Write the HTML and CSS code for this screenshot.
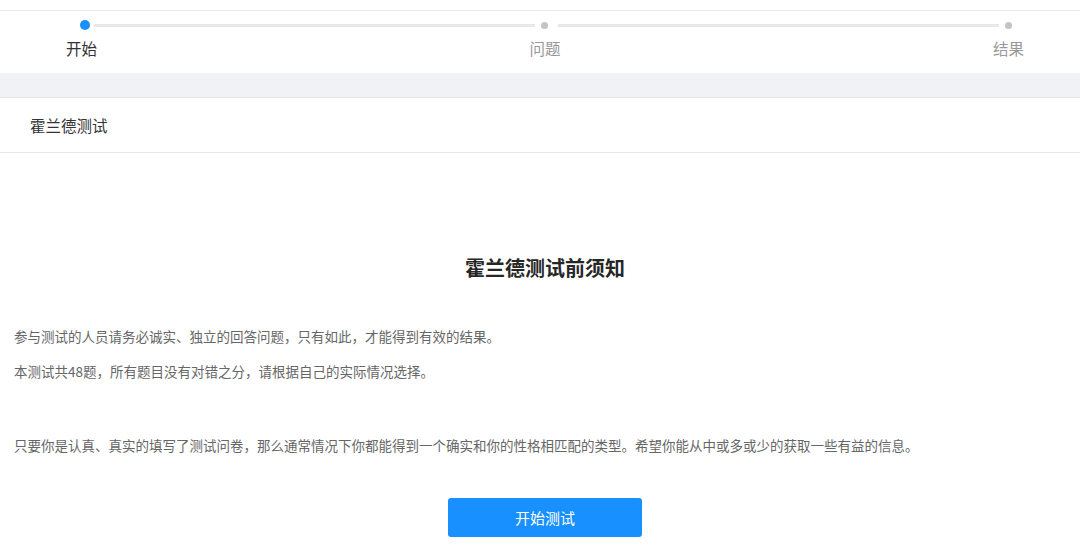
FILE: index.html
```html
<!DOCTYPE html>
<html lang="zh-CN">
<head>
    <meta charset="UTF-8">
    <meta name="viewport" content="width=device-width, initial-scale=1.0">
    <title>霍兰德测试</title>
    <link rel="stylesheet" href="styles.css">
</head>
<body>
    <div class="page">
        <div class="steps">
            <div class="dot active"></div>
            <div class="tail"></div>
            <div class="dot"></div>
            <div class="tail"></div>
            <div class="dot"></div>
            <div class="label active">开始</div>
            <div></div>
            <div class="label">问题</div>
            <div></div>
            <div class="label">结果</div>
        </div>

        <div class="band"></div>

        <div class="card">
            <div class="card-head">霍兰德测试</div>
            <div class="card-body">
                <h2 class="notice-title">霍兰德测试前须知</h2>
                <p class="first">参与测试的人员请务必诚实、独立的回答问题，只有如此，才能得到有效的结果。</p>
                <p class="second">本测试共48题，所有题目没有对错之分，请根据自己的实际情况选择。</p>
                <p class="third">只要你是认真、真实的填写了测试问卷，那么通常情况下你都能得到一个确实和你的性格相匹配的类型。希望你能从中或多或少的获取一些有益的信息。</p>
                <div class="actions">
                    <button class="start-btn">开始测试</button>
                </div>
            </div>
        </div>
    </div>
</body>
</html>
```

FILE: styles.css
```css
* {
    margin: 0;
    padding: 0;
    box-sizing: border-box;
}

html, body {
    background: #fff;
    overflow: hidden;
}

body {
    font-family: "Noto Sans CJK SC", "Noto Sans", "Liberation Sans", sans-serif;
    color: #333;
}

.page {
    width: 1090px;
    padding-top: 10px;
}

/* steps */
.steps {
    display: grid;
    grid-template-columns: auto 1fr auto 1fr auto;
    align-items: center;
    row-gap: 7px;
    border-top: 1px solid #ececec;
    padding: 9px 66px 14px 66px;
}

.dot {
    justify-self: center;
    width: 7px;
    height: 7px;
    border-radius: 50%;
    background: #c4c4c4;
}

.dot.active {
    width: 10px;
    height: 10px;
    margin-left: 6px;
    background: #1890ff;
}

.tail {
    height: 3px;
    background: #e8e8e8;
    margin: 0 -6px 0 -3px;
}

.label {
    justify-self: center;
    font-size: 15.5px;
    line-height: 22px;
    color: #999;
}

.label.active {
    color: #333;
}

.band {
    height: 25px;
    background: #f0f2f5;
    border-bottom: 1px solid #e2e4e8;
}

/* card */
.card-head {
    height: 55px;
    line-height: 54px;
    padding-left: 30px;
    font-size: 15.5px;
    color: #333;
    border-bottom: 1px solid #e8e8e8;
}

.card-body {
    padding: 101px 0 20px 14px;
}

.notice-title {
    text-align: center;
    font-size: 20px;
    line-height: 28px;
    font-weight: bold;
    color: #262626;
    margin-bottom: 44px;
    padding-right: 14px;
}

.card-body p {
    font-size: 13.5px;
    line-height: 20px;
    color: #666;
}

.card-body p.second {
    margin-top: 15px;
}

.card-body p.third {
    margin-top: 54px;
}

.actions {
    display: flex;
    justify-content: center;
    margin-top: 43px;
    padding-right: 14px;
}

.start-btn {
    width: 194px;
    height: 39px;
    border: none;
    border-radius: 3px;
    background: #1890ff;
    color: #fff;
    font-family: inherit;
    font-size: 15px;
    cursor: pointer;
}
```
